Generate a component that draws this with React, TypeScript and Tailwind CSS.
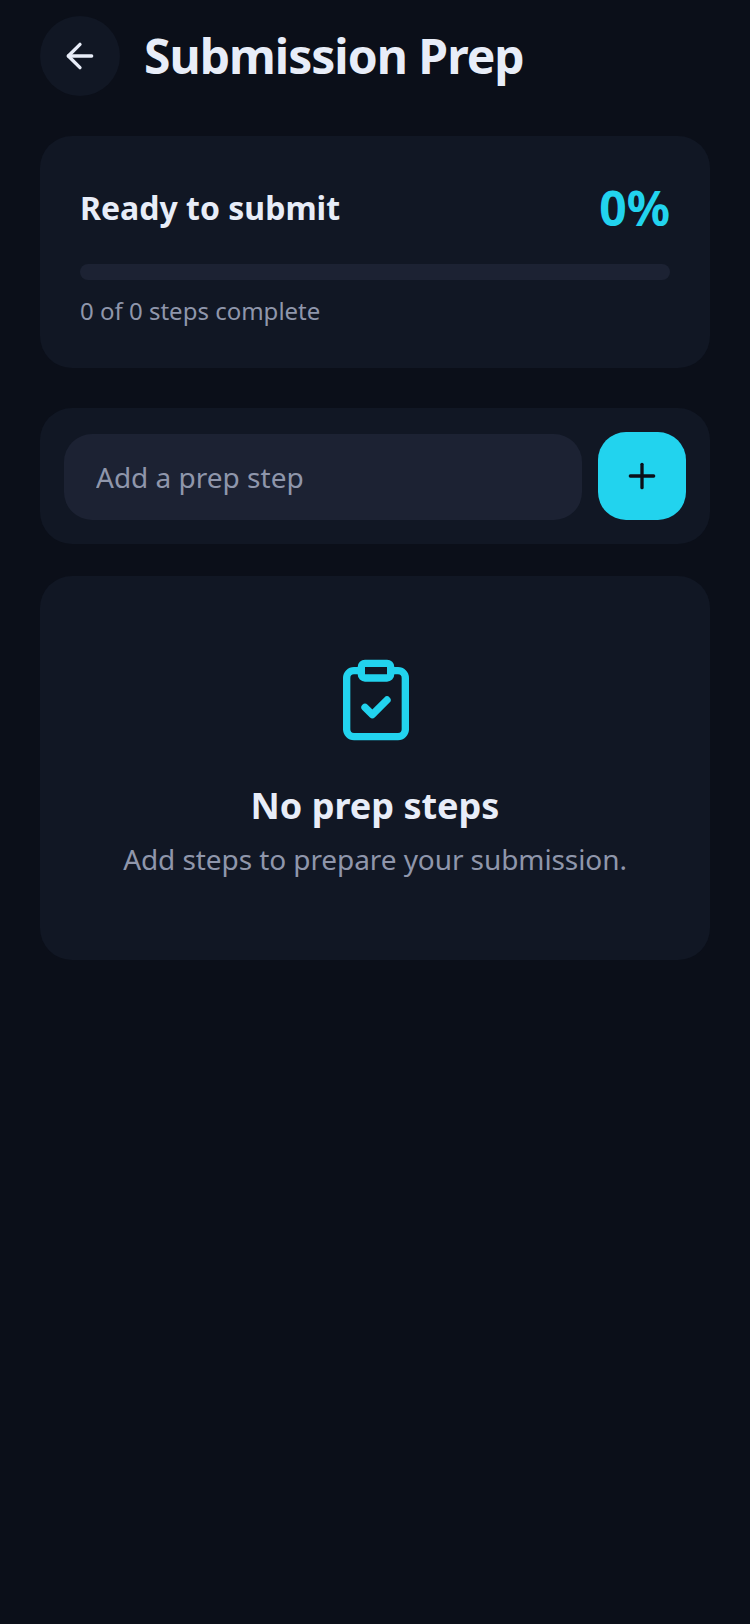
import { ArrowLeft, ClipboardCheck, Plus } from "lucide-react";

export default function App() {
    return (
        <div className="min-h-[1624px] bg-[#0b0f19] px-10 pt-4 font-['Noto_Sans',sans-serif]">
            <div className="flex items-center gap-6">
                <button className="flex h-20 w-20 items-center justify-center rounded-full bg-[#111724] text-[#e8edf8]">
                    <ArrowLeft size={40} strokeWidth={2} />
                </button>
                <h1 className="text-[48px] font-bold leading-[64px] tracking-[-1px] text-[#e8edf8]">Submission Prep</h1>
            </div>

            <div className="mt-10 h-[232px] rounded-[32px] bg-[#111724] px-10 pt-12">
                <div className="flex items-center justify-between">
                    <span className="text-[32px] font-bold leading-[48px] text-[#e8edf8]">Ready to submit</span>
                    <span className="text-[48px] font-bold leading-[48px] text-[#22d3ee]">0%</span>
                </div>
                <div className="mt-8 h-4 rounded-lg bg-[#1c2233]"></div>
                <p className="mt-[15px] text-[24px] leading-[32px] text-[#8f96ab]">0 of 0 steps complete</p>
            </div>

            <div className="mt-10 flex items-end gap-4 rounded-[32px] bg-[#111724] p-6">
                <input
                    placeholder="Add a prep step"
                    className="h-[86px] min-w-0 flex-1 rounded-[28px] bg-[#1c2233] px-8 text-[28px] outline-none placeholder:text-[#8f96ab]"
                />
                <button className="flex h-[88px] w-[88px] items-center justify-center rounded-[28px] bg-[#22d3ee] text-[#0b0f19]">
                    <Plus size={40} strokeWidth={2} />
                </button>
            </div>

            <div className="mt-8 flex h-[384px] flex-col items-center rounded-[32px] bg-[#111724] pt-20">
                <ClipboardCheck size={88} strokeWidth={2} className="ml-0.5 text-[#22d3ee]" />
                <h2 className="mt-[38px] text-[36px] font-bold leading-[48px] text-[#e8edf8]">No prep steps</h2>
                <p className="mt-[9px] text-[28px] leading-[40px] tracking-[-0.08px] text-[#8f96ab]">Add steps to prepare your submission.</p>
            </div>
        </div>
    );
}
